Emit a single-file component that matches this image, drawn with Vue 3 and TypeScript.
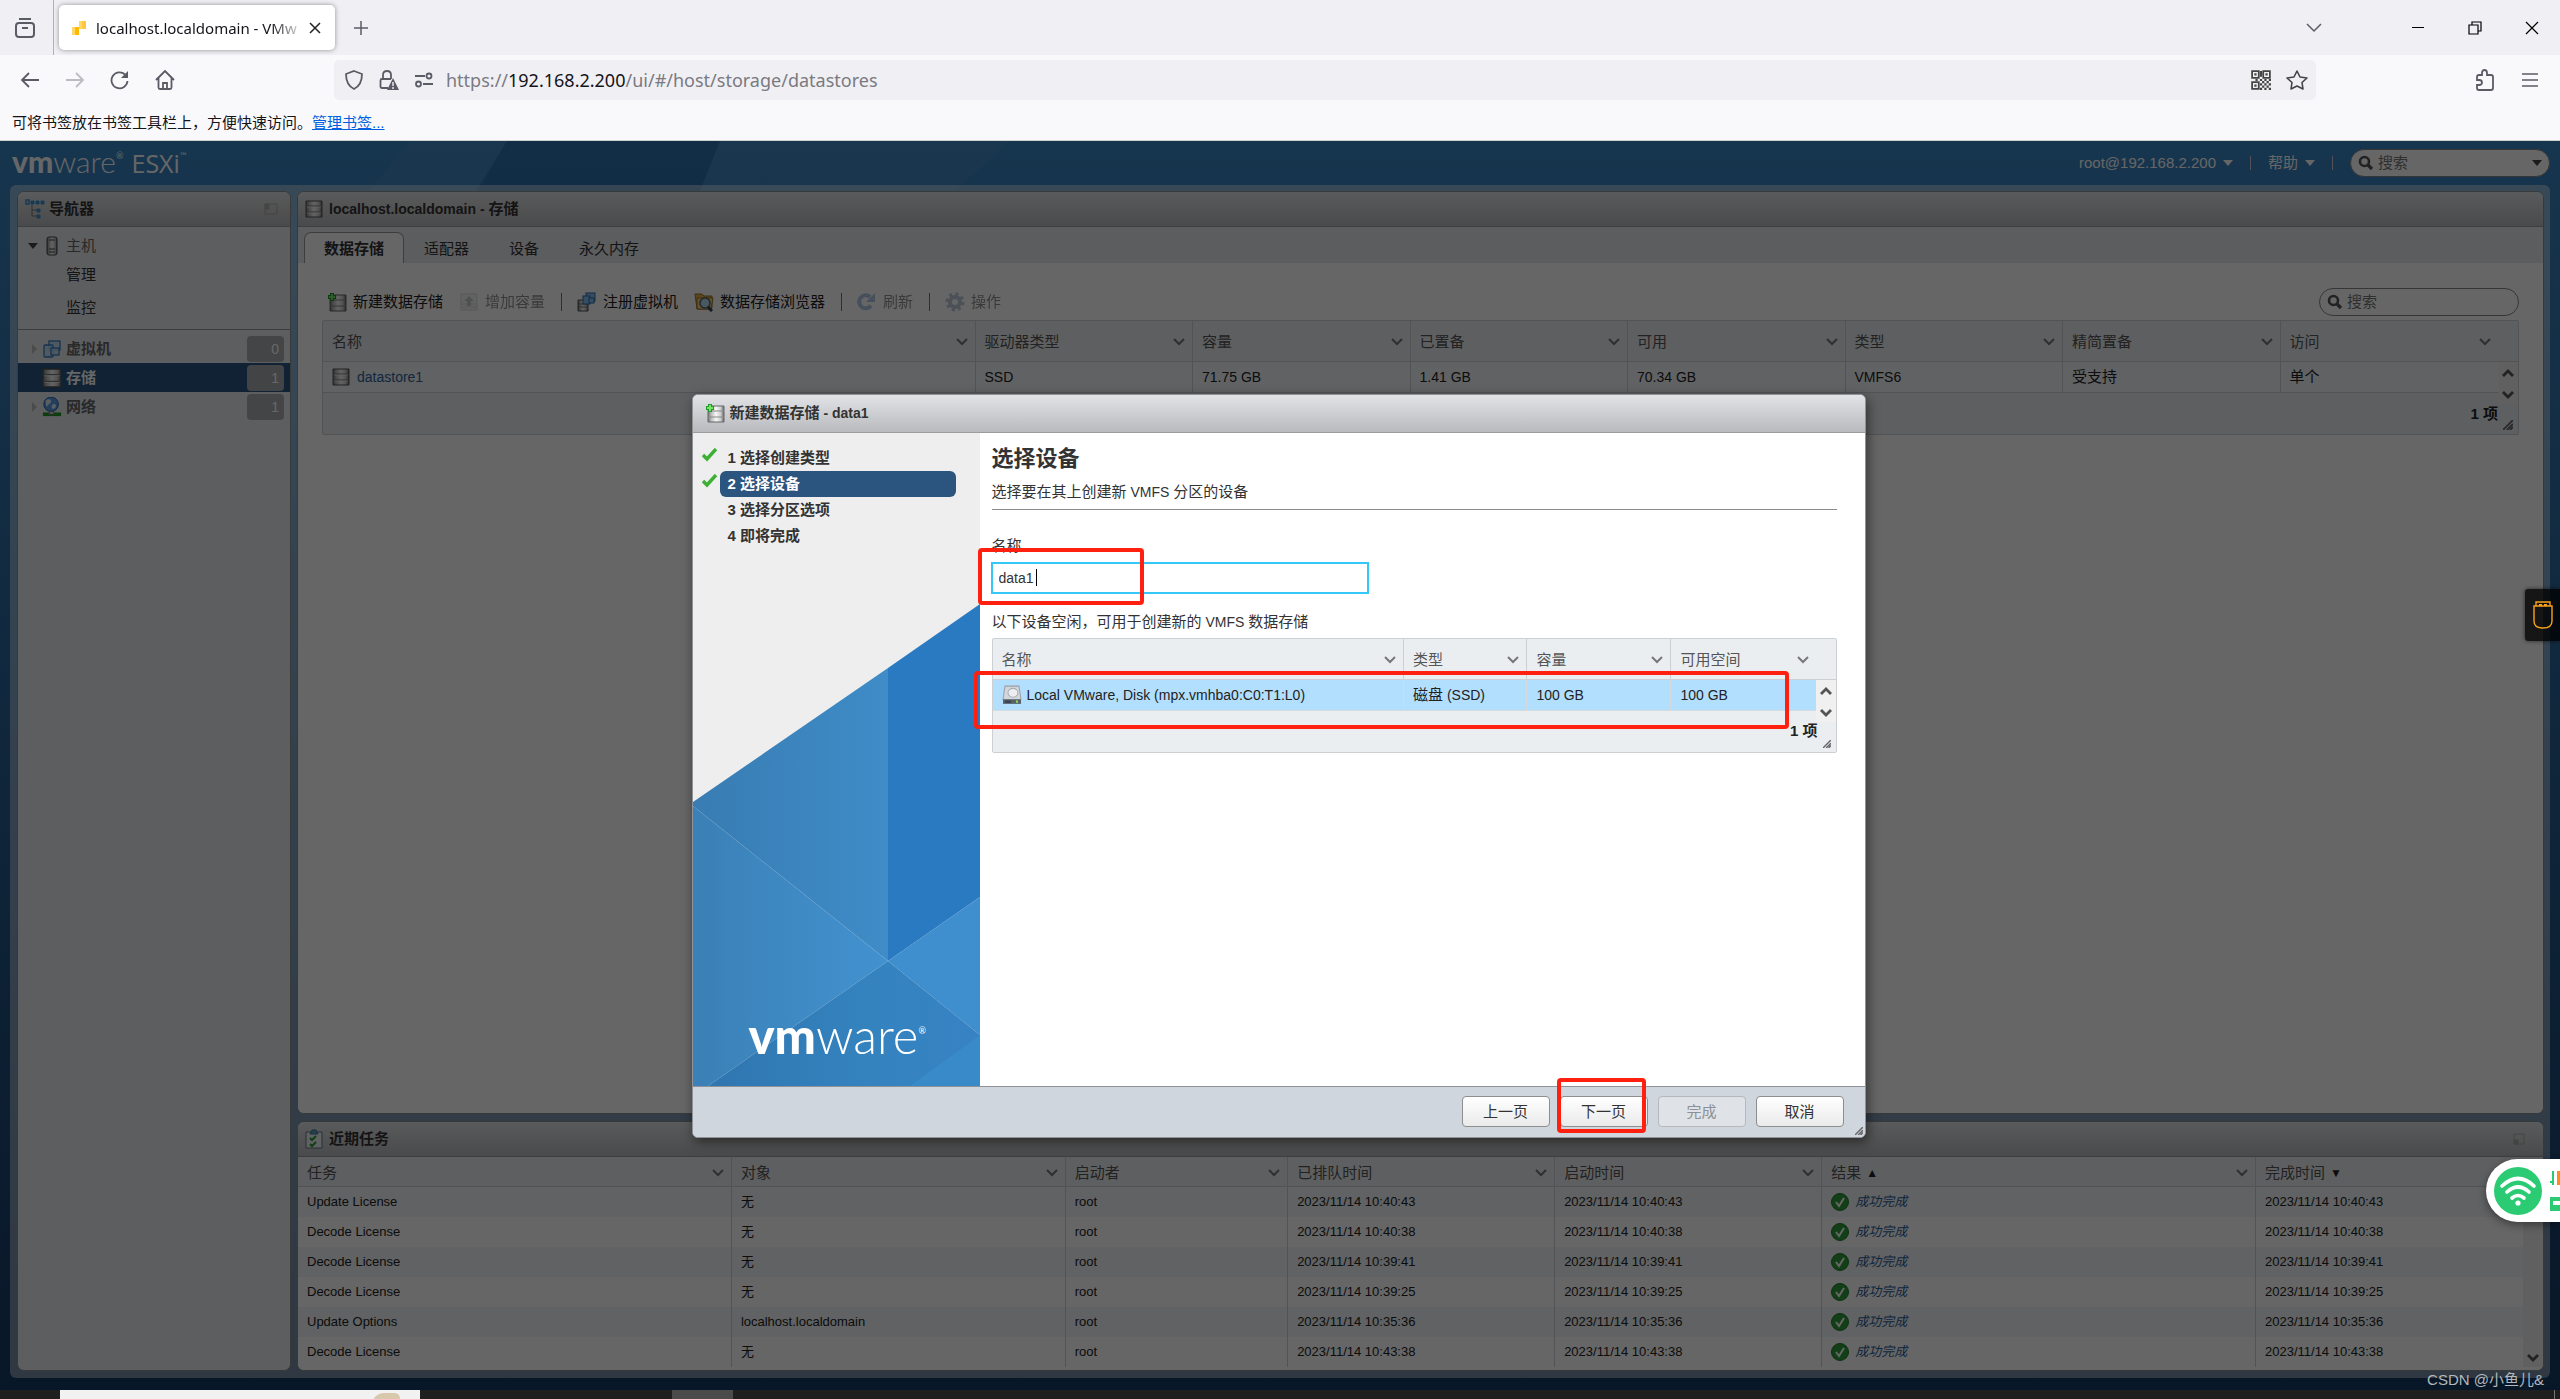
<script setup lang="ts">
import { ref } from 'vue'

interface Column { label: string; width: number; sort?: string }

const storeColumns: Column[] = [
  { label: '名称', width: 30 },
  { label: '驱动器类型', width: 10 },
  { label: '容量', width: 10 },
  { label: '已置备', width: 10 },
  { label: '可用', width: 10 },
  { label: '类型', width: 10 },
  { label: '精简置备', width: 10 },
  { label: '访问', width: 10 },
]

const deviceColumns: Column[] = [
  { label: '名称', width: 50 },
  { label: '类型', width: 15 },
  { label: '容量', width: 17.5 },
  { label: '可用空间', width: 17.5 },
]

const taskColumns: Column[] = [
  { label: '任务', width: 19.5 },
  { label: '对象', width: 15 },
  { label: '启动者', width: 10 },
  { label: '已排队时间', width: 12 },
  { label: '启动时间', width: 12 },
  { label: '结果', width: 19.5, sort: '▲' },
  { label: '完成时间', width: 12, sort: '▼' },
]

const tasks = [
  { name: 'Update License', target: '无', time: '2023/11/14 10:40:43' },
  { name: 'Decode License', target: '无', time: '2023/11/14 10:40:38' },
  { name: 'Decode License', target: '无', time: '2023/11/14 10:39:41' },
  { name: 'Decode License', target: '无', time: '2023/11/14 10:39:25' },
  { name: 'Update Options', target: 'localhost.localdomain', time: '2023/11/14 10:35:36' },
  { name: 'Decode License', target: '无', time: '2023/11/14 10:43:38' },
]

const inventory = [
  { label: '虚拟机', icon: '#i-vms', count: 0, active: false },
  { label: '存储', icon: '#i-store', count: 1, active: true },
  { label: '网络', icon: '#i-net', count: 1, active: false },
]

const steps = [
  { label: '1 选择创建类型', done: true, current: false },
  { label: '2 选择设备', done: true, current: true },
  { label: '3 选择分区选项', done: false, current: false },
  { label: '4 即将完成', done: false, current: false },
]

const url = ref('')
const name = ref('data1')
const globalQuery = ref('')
const storeQuery = ref('')
</script>

<template>
  <div class="page">
    <svg class="defs" aria-hidden="true">
      <defs>
        <linearGradient id="metal" x1="0" x2="1" y1="0" y2="0">
          <stop offset="0" stop-color="#777" /><stop offset=".2" stop-color="#bbb" />
          <stop offset=".5" stop-color="#f8f8f8" /><stop offset=".8" stop-color="#ccc" /><stop offset="1" stop-color="#666" />
        </linearGradient>
        <symbol id="i-store" viewBox="0 0 18 18">
          <path d="M1 1h16v16H1z" fill="url(#metal)" stroke="#555" />
          <path d="M1 6h16M1 12h16" stroke="#777" stroke-width="1" />
          <path d="M2 7h14M2 13h14" stroke="#fff" opacity=".6" />
        </symbol>
        <symbol id="i-store-add" viewBox="0 0 20 20">
          <path d="M3 3h16v16H3z" fill="url(#metal)" stroke="#666" />
          <path d="M3 8h16M3 14h16" stroke="#888" />
          <path d="M5 1v8M1 5h8" stroke="#1f9a2b" stroke-width="4" />
          <path d="M5 2v6M2 5h6" stroke="#7be36a" stroke-width="2" />
        </symbol>
        <symbol id="i-grow" viewBox="0 0 20 20">
          <path d="M2 2h16v16H2z" fill="#e6ece8" stroke="#bbb" />
          <path d="M2 12h16M2 15h16" stroke="#bbb" />
          <path d="M10 4l5 5h-3v5H8V9H5z" fill="#8a9a8f" />
        </symbol>
        <symbol id="i-vms" viewBox="0 0 20 20">
          <g fill="#bcdcf7" fill-opacity=".85" stroke="#3a7fc4" stroke-width="1.3">
            <rect x="7" y="2" width="11" height="9" /><rect x="2" y="6" width="9" height="12" rx="1" /><rect x="9" y="9" width="8" height="7" />
          </g>
        </symbol>
        <symbol id="i-register" viewBox="0 0 20 20">
          <path d="M1 8h10v11H1z" fill="url(#metal)" stroke="#555" /><path d="M1 12h10M1 15h10" stroke="#777" />
          <g fill="#8cc1ee" stroke="#2a6cb4"><rect x="9" y="1" width="9" height="8" /><rect x="6" y="4" width="7" height="8" /><rect x="12" y="6" width="5" height="5" /></g>
        </symbol>
        <symbol id="i-browse" viewBox="0 0 20 20">
          <path d="M1 2h7l2 2h8v12l-3 1H3z" fill="#e2b04c" stroke="#9a7326" /><path d="M3 6h16l-2 11H3z" fill="#f4d27c" stroke="#9a7326" />
          <circle cx="11" cy="11" r="5" fill="#b9dcf2" stroke="#567" stroke-width="1.5" /><path d="M14 15l4 4" stroke="#345" stroke-width="3" />
        </symbol>
        <symbol id="i-refresh" viewBox="0 0 20 20">
          <path d="M14 13.500A6.500 6.500 0 1 1 13 5" fill="none" stroke="#5b93d0" stroke-width="4" /><path d="M18 1v9H9z" fill="#5b93d0" />
        </symbol>
        <symbol id="i-gear" viewBox="0 0 20 20">
          <circle cx="10" cy="10" r="8" fill="none" stroke="#7f95b5" stroke-width="3" stroke-dasharray="3.2 3.080" />
          <circle cx="10" cy="10" r="5" fill="none" stroke="#7f95b5" stroke-width="4" />
        </symbol>
        <symbol id="i-net" viewBox="0 0 20 22">
          <circle cx="9" cy="8" r="8" fill="#5b9de6" stroke="#1d56a8" /><path d="M4 3c3-1 5 0 5 2S6 8 5 10 3 7 3 5zM11 8c3-1 4 1 3 3s-3 3-4 1 0-3 1-4z" fill="#dcefff" />
          <path d="M0 19h20" stroke="#1a9b22" stroke-width="4" /><path d="M6 19l2-3h3l2 3z" fill="#ddd" stroke="#666" />
        </symbol>
        <symbol id="i-search" viewBox="0 0 16 16">
          <circle cx="6.500" cy="6.500" r="4.500" fill="none" stroke="#555" stroke-width="2.600" /><path d="M10 10l4 4" stroke="#555" stroke-width="3.200" />
        </symbol>
        <symbol id="i-chev" viewBox="0 0 12 8"><path d="M1 1l5 5 5-5" fill="none" stroke="currentColor" stroke-width="2" /></symbol>
        <symbol id="i-bigchev" viewBox="0 0 12 8"><path d="M1 1l5 5 5-5" fill="none" stroke="currentColor" stroke-width="2.800" /></symbol>
        <symbol id="i-grip" viewBox="0 0 10 10"><path d="M0 10L10 0M4 10l6-6M7 10l3-3" stroke="#666" stroke-width="1.800" /></symbol>
        <symbol id="i-ok" viewBox="0 0 18 18">
          <circle cx="9" cy="9" r="8.500" fill="#2f9e3a" stroke="#1d7a28" /><path d="M5 9l3 4 5-8" fill="none" stroke="#fff" stroke-width="2" />
        </symbol>
      </defs>
    </svg>

    <header class="chrome">
      <div class="tabstrip">
        <button class="ico first" aria-label="最近浏览">
          <svg width="22" height="20" viewBox="0 0 22 20" fill="none" stroke="#5b5b66" stroke-width="2"><path d="M5 1h12" /><rect x="2" y="5" width="18" height="14" rx="3" /><path d="M8 10h6" /></svg>
        </button>
        <div class="tab">
          <svg width="16" height="16" viewBox="0 0 16 16"><path d="M8 1h7v8H8z" fill="#ffc83d" /><path d="M1 7h7v8H1z" fill="#ffb900" /><path d="M8 1h3v8H8zM1 7h3v8H1z" fill="#ffd76a" /></svg>
          <span class="tab-title">localhost.localdomain - VMw</span>
          <button class="ico" aria-label="关闭标签页"><svg width="12" height="12" viewBox="0 0 12 12" stroke="#222" stroke-width="1.500"><path d="M1 1l10 10M11 1L1 11" /></svg></button>
        </div>
        <button class="ico plus" aria-label="新标签页"><svg width="16" height="16" viewBox="0 0 16 16" stroke="#5b5b66" stroke-width="1.500"><path d="M8 1v14M1 8h14" /></svg></button>
        <div class="winctl">
          <button class="ico list" aria-label="列出标签页"><svg width="16" height="10" viewBox="0 0 16 10" fill="none" stroke="#5b5b66" stroke-width="1.500"><path d="M1 1l7 7 7-7" /></svg></button>
          <button class="ico" aria-label="最小化"><svg width="14" height="14" viewBox="0 0 14 14" stroke="#000"><path d="M1 6.500h12" /></svg></button>
          <button class="ico" aria-label="还原"><svg width="14" height="14" viewBox="0 0 14 14" fill="none" stroke="#000" stroke-width="1.200"><path d="M1 4h9v9H1zM4 4V1h9v9h-3" /></svg></button>
          <button class="ico" aria-label="关闭"><svg width="14" height="14" viewBox="0 0 14 14" stroke="#000" stroke-width="1.200"><path d="M1 1l12 12M13 1L1 13" /></svg></button>
        </div>
      </div>
      <div class="toolbar">
        <div class="navbtns">
          <button class="ico" aria-label="后退"><svg width="20" height="20" viewBox="0 0 20 20" fill="none" stroke="#5b5b66" stroke-width="1.800"><path d="M19 10H2M9 3l-7 7 7 7" /></svg></button>
          <button class="ico" aria-label="前进"><svg width="20" height="20" viewBox="0 0 20 20" fill="none" stroke="#bcbcc2" stroke-width="1.800"><path d="M1 10h17M11 3l7 7-7 7" /></svg></button>
          <button class="ico" aria-label="刷新"><svg width="20" height="20" viewBox="0 0 20 20" fill="none" stroke="#5b5b66" stroke-width="1.800"><path d="M17.500 11A8 8 0 1 1 15 4.500" /><path d="M18 1v7h-7z" fill="#5b5b66" stroke="none" /></svg></button>
          <button class="ico" aria-label="主页"><svg width="20" height="20" viewBox="0 0 20 20" fill="none" stroke="#5b5b66" stroke-width="1.800"><path d="M1 10l9-9 9 9M3.500 8v9.500q0 1.500 1.500 1.500h10q1.500 0 1.500-1.500V8M8 19v-6h4v6" /></svg></button>
        </div>
        <div class="urlbar">
          <svg width="20" height="20" viewBox="0 0 20 20" fill="none" stroke="#5b5b66" stroke-width="1.800"><path d="M10 1l8 3c0 7-2 12-8 15C4 16 2 11 2 4z" /></svg>
          <svg width="20" height="20" viewBox="0 0 20 20" fill="none" stroke="#5b5b66" stroke-width="1.800"><path d="M9 18H3q-1.500 0-1.500-1.500v-6Q1.500 9 3 9h9M4 9V5q0-4 4-4t4 4v4" /><path d="M14 8l6 12H8z" fill="#5b5b66" stroke="none" /><path d="M14 12v4M14 17v2" stroke="#fff" stroke-width="1.300" /></svg>
          <svg width="20" height="20" viewBox="0 0 20 20" fill="none" stroke="#5b5b66" stroke-width="1.800"><path d="M1 6h10M9 14h10" /><circle cx="15" cy="6" r="2.500" /><circle cx="4.500" cy="14" r="2.500" /></svg>
          <label class="urltext">https://<b>192.168.2.200</b>/ui/#/host/storage/datastores<input v-model="url" aria-label="地址" /></label>
          <svg width="20" height="20" viewBox="0 0 18 18" fill="none" stroke="#444" stroke-width="1.600"><path d="M1 1h6v6H1zM11 1h6v6h-6zM1 11h6v6H1z" /><path d="M3 4h2M13 4h2M3 14h2" stroke-width="2" /><path d="M9 1v5M8 9h2M12 9h2M16 9h2M10 11h2M14 11h2M12 13h2M16 13h2M10 15h2M14 15h2M12 17h2M16 17h2M4 9h2M9 12v2M9 16v2" stroke-width="2" /></svg>
          <svg width="22" height="22" viewBox="0 0 22 20" fill="none" stroke="#444" stroke-width="1.600" stroke-linejoin="round"><path d="M11 1l3 6 7 1-5 4.500 1 6.500-6-3-6 3 1-6.500L1 8l7-1z" /></svg>
        </div>
        <div class="right">
          <button class="ico" aria-label="扩展"><svg width="20" height="22" viewBox="0 0 20 22" fill="none" stroke="#5b5b66" stroke-width="1.800"><path d="M2 11V8q0-2 2-2h3V4q0-3 2.500-3T12 4v2h4q2 0 2 2v11q0 2-2 2H4q-2 0-2-2v-3h2q3 0 3-2.500T4 11z" /></svg></button>
          <button class="ico" aria-label="菜单"><svg width="16" height="14" viewBox="0 0 16 14" stroke="#5b5b66" stroke-width="1.500"><path d="M0 1h16M0 7h16M0 13h16" /></svg></button>
        </div>
      </div>
      <p class="bookmarks">可将书签放在书签工具栏上，方便快速访问。<a href="#">管理书签...</a></p>
    </header>

    <section class="app">
      <svg class="facets" viewBox="0 0 2560 1249" preserveAspectRatio="none" aria-hidden="true">
        <path d="M409 0L507 0 450 100 330 100z" fill="#fff" opacity=".04" />
        <path d="M507 0H720L680 100H445z" fill="#003070" opacity=".2" />
        <path d="M720 0H1010L900 100H680z" fill="#fff" opacity=".04" />
      </svg>

      <div class="appbar">
        <h1 class="brand"><span class="vm">vm</span><span class="ware">ware</span><sup>®</sup><span class="esx">ESXi</span><sup>™</sup></h1>
        <div class="appbar-right">
          <button class="link">root@192.168.2.200<i class="caret" /></button>
          <i class="bar" />
          <button class="link">帮助<i class="caret" /></button>
          <i class="bar" />
          <label class="search wide"><svg width="16" height="16"><use href="#i-search" /></svg><input v-model="globalQuery" placeholder="搜索" /><i class="caret dark" /></label>
        </div>
      </div>

      <div class="frame">
        <aside class="panel nav">
          <div class="panel-head nav-head">
            <svg width="20" height="20" viewBox="0 0 20 20" fill="none" stroke="#3a8fd0"><path d="M1 1h3v4H1z" stroke-width="1.500" /><path d="M6 2h3v3H6zM11 2h3v3h-3zM16 2h3v3h-3zM12 10h3v3h-3zM12 16h3v3h-3z" fill="#3a8fd0" /><path d="M7 6v11h5M7 11h5" stroke="#777" /></svg>
            <h2>导航器</h2>
            <svg class="dock" width="14" height="12" viewBox="0 0 14 12" fill="none" stroke="#888"><path d="M1 1h12v10H1z" /><path d="M1 1h4v5H1z" fill="#888" /></svg>
          </div>
          <div class="host">
            <a href="#" class="row host-row"><i class="caret dark" /><svg width="12" height="20" viewBox="0 0 12 20"><rect x="1" y="1" width="10" height="18" rx="2" fill="url(#metal)" stroke="#444" /><path d="M3 4h6M3 13h6M3 16h6" stroke="#444" /></svg>主机</a>
            <a href="#" class="sub">管理</a>
            <a href="#" class="sub">监控</a>
          </div>
          <a v-for="item in inventory" :key="item.label" href="#" class="row inv" :class="{ active: item.active }">
            <i class="tri" /><svg width="20" height="20"><use :href="item.icon" /></svg><b>{{ item.label }}</b><span class="badge">{{ item.count }}</span>
          </a>
        </aside>

        <div class="stack">
          <main class="panel main">
            <div class="panel-head">
              <svg width="18" height="18"><use href="#i-store" /></svg>
              <h2><span class="lat">localhost.localdomain - </span>存储</h2>
            </div>
            <nav class="tabs">
              <a href="#" class="on">数据存储</a><a href="#">适配器</a><a href="#">设备</a><a href="#">永久内存</a>
            </nav>
            <div class="content">
              <div class="actions">
                <button><svg width="20" height="20"><use href="#i-store-add" /></svg>新建数据存储</button>
                <button class="off"><svg width="20" height="20"><use href="#i-grow" /></svg>增加容量</button>
                <i class="bar" />
                <button><svg width="20" height="20"><use href="#i-register" /></svg>注册虚拟机</button>
                <button><svg width="20" height="20"><use href="#i-browse" /></svg>数据存储浏览器</button>
                <i class="bar" />
                <button class="off"><svg width="20" height="20"><use href="#i-refresh" /></svg>刷新</button>
                <i class="bar" />
                <button class="off"><svg width="20" height="20"><use href="#i-gear" /></svg>操作</button>
                <label class="search"><svg width="16" height="16"><use href="#i-search" /></svg><input v-model="storeQuery" placeholder="搜索" /></label>
              </div>
              <div class="grid">
                <table>
                  <colgroup><col v-for="c in storeColumns" :key="c.label" :style="{ width: c.width + '%' }" /></colgroup>
                  <thead><tr><th v-for="c in storeColumns" :key="c.label"><div>{{ c.label }}<svg width="12" height="8"><use href="#i-chev" /></svg></div></th></tr></thead>
                  <tbody><tr>
                    <td><a href="#" class="store"><svg width="18" height="18"><use href="#i-store" /></svg>datastore1</a></td>
                    <td>SSD</td><td>71.75 GB</td><td>1.41 GB</td><td>70.34 GB</td><td>VMFS6</td><td class="zh">受支持</td><td class="zh">单个</td>
                  </tr></tbody>
                </table>
                <div class="gutter"><div class="scroll"><svg class="flip" width="12" height="8"><use href="#i-bigchev" /></svg><svg width="12" height="8"><use href="#i-bigchev" /></svg></div></div>
                <div class="foot">1 项<svg width="10" height="10"><use href="#i-grip" /></svg></div>
              </div>
            </div>
          </main>

          <section class="panel tasks">
            <div class="panel-head">
              <svg width="18" height="20" viewBox="0 0 18 20"><path d="M1 3h16v16H1z" fill="#eef4f8" stroke="#678" /><path d="M5 5l2-4h4l2 4z" fill="#5aa0d0" stroke="#478" /><path d="M5 9l2 2 4-4M5 15l2 2 4-4" fill="none" stroke="#2a9a30" stroke-width="2" /></svg>
              <h2>近期任务</h2>
              <svg class="dock" width="12" height="12" viewBox="0 0 12 12" fill="none" stroke="#888"><path d="M1 1h10v10H1z" /><path d="M1 7h4v4H1z" fill="#888" /></svg>
            </div>
            <div class="grid tgrid">
              <table>
                <colgroup><col v-for="c in taskColumns" :key="c.label" :style="{ width: c.width + '%' }" /></colgroup>
                <thead><tr><th v-for="c in taskColumns" :key="c.label"><div>{{ c.label }}<span v-if="c.sort" class="sort">{{ c.sort }}</span><svg v-if="c.sort !== '▼'" width="12" height="8"><use href="#i-chev" /></svg></div></th></tr></thead>
                <tbody>
                  <tr v-for="(t, i) in tasks" :key="i">
                    <td>{{ t.name }}</td><td>{{ t.target }}</td><td>root</td><td>{{ t.time }}</td><td>{{ t.time }}</td>
                    <td><a href="#" class="result"><svg width="18" height="18"><use href="#i-ok" /></svg><em>成功完成</em></a></td>
                    <td>{{ t.time }}</td>
                  </tr>
                </tbody>
              </table>
              <div class="gutter"><div class="scroll"><svg class="flip" width="12" height="8"><use href="#i-bigchev" /></svg><svg width="12" height="8"><use href="#i-bigchev" /></svg></div></div>
            </div>
          </section>
        </div>
      </div>

      <div class="overlay">
        <form class="dialog" role="dialog" aria-label="新建数据存储" @submit.prevent>
          <div class="dlg-head"><svg width="20" height="20"><use href="#i-store-add" /></svg><h2>新建数据存储<span class="lat"> - data1</span></h2></div>
          <div class="dlg-body">
            <div class="side">
              <svg class="art" viewBox="0 0 287 482" preserveAspectRatio="none" aria-hidden="true">
                <defs>
                  <linearGradient id="a1"><stop offset="0" stop-color="#387cb2" /><stop offset="1" stop-color="#3f8cc8" /></linearGradient>
                  <linearGradient id="a2"><stop offset="0" stop-color="#3b80b6" /><stop offset="1" stop-color="#4292d0" /></linearGradient>
                  <linearGradient id="a3"><stop offset="0" stop-color="#3076b0" /><stop offset=".6" stop-color="#3483bf" /><stop offset="1" stop-color="#3782c4" /></linearGradient>
                </defs>
                <path d="M0 198L195 64V357L0 202z" fill="url(#a1)" />
                <path d="M195 64L287 0V293L195 357z" fill="#2a7ac2" />
                <path d="M0 202L195 357 15 482H0z" fill="url(#a2)" />
                <path d="M195 357L287 293V431z" fill="#3f8ecd" />
                <path d="M195 357L287 431V482H15z" fill="url(#a3)" />
                <path d="M287 431V482H217z" fill="#388ac8" />
              </svg>
              <ol>
                <li v-for="s in steps" :key="s.label">
                  <svg width="16" height="14" viewBox="0 0 16 14"><path v-if="s.done" d="M1 7l4 4L14 1" fill="none" stroke="#3cb034" stroke-width="3.400" /></svg>
                  <span :class="{ cur: s.current }">{{ s.label }}</span>
                </li>
              </ol>
              <div class="brand big"><span class="vm">vm</span><span class="ware">ware</span><sup>®</sup></div>
            </div>
            <div class="pane">
              <h3>选择设备</h3>
              <p class="desc">选择要在其上创建新<span class="lat"> VMFS </span>分区的设备</p>
              <label class="flabel" for="dsname">名称</label>
              <div class="field"><input id="dsname" v-model="name" /><i class="cursor" /><i class="mark m1" /></div>
              <p class="note">以下设备空闲，可用于创建新的<span class="lat"> VMFS </span>数据存储</p>
              <div class="grid dgrid">
                <table>
                  <colgroup><col v-for="c in deviceColumns" :key="c.label" :style="{ width: c.width + '%' }" /></colgroup>
                  <thead><tr><th v-for="c in deviceColumns" :key="c.label"><div>{{ c.label }}<svg width="12" height="8"><use href="#i-chev" /></svg></div></th></tr></thead>
                  <tbody><tr>
                    <td><span class="disk"><svg width="20" height="20" viewBox="0 0 20 18" preserveAspectRatio="none"><path d="M3 1h14l2 12H1z" fill="#d3d7dc" stroke="#9a9ea4" /><ellipse cx="11" cy="7" rx="5" ry="4" fill="#eceef0" stroke="#a9adb3" /><path d="M1 13h18v4H1z" fill="#56616c" /><path d="M14 15h2" stroke="#8be04a" stroke-width="2" /><path d="M3 15h6" stroke="#39424c" stroke-width="2" /></svg>Local VMware, Disk (mpx.vmhba0:C0:T1:L0)</span></td>
                    <td><span class="zh">磁盘</span> (SSD)</td><td>100 GB</td><td>100 GB</td>
                  </tr></tbody>
                </table>
                <div class="gutter"><div class="scroll"><svg class="flip" width="12" height="8"><use href="#i-bigchev" /></svg><svg width="12" height="8"><use href="#i-bigchev" /></svg></div></div>
                <div class="foot">1 项<svg width="8" height="8"><use href="#i-grip" /></svg></div>
                <i class="mark m2" />
              </div>
            </div>
          </div>
          <div class="dlg-foot">
            <button>上一页</button>
            <span class="next"><button>下一页</button><i class="mark m3" /></span>
            <button disabled>完成</button>
            <button>取消</button>
            <svg class="grip" width="8" height="8"><use href="#i-grip" /></svg>
          </div>
        </form>
      </div>

      <div class="usb"><svg width="20" height="28" viewBox="0 0 20 28" fill="none" stroke="#f9a11b" stroke-width="1.400"><path d="M3 5V1h14v4M1 5h18v15q0 7-9 7T1 20z" /><path d="M6 4h3M11 4h3" stroke-width="2" /></svg></div>
      <div class="wifi">
        <svg width="48" height="48" viewBox="0 0 48 48" fill="none" stroke="#fff" stroke-width="3.600" stroke-linecap="round"><circle cx="24" cy="24" r="24" fill="#2bcb73" stroke="none" /><path d="M8 19q16-15 32 0M13 25q11-10 22 0M18 31q6-5 12 0" /><circle cx="24" cy="36" r="2.600" fill="#fff" stroke="none" /></svg>
        <svg width="12" height="40" viewBox="0 0 12 40"><path d="M3 0v14M0 11h3" stroke="#2bcb73" stroke-width="2" /><path d="M7 0h5v14H7z" fill="#ff8a1e" /><path d="M0 26h12v14H0z" fill="#2bcb73" /><path d="M3 30h9v4H3z" fill="#fff" /></svg>
      </div>
      <div class="watermark">CSDN @小鱼儿&amp;</div>
    </section>

    <footer class="taskbar">
      <div class="thumb"><i /></div>
      <div class="task" />
      <div class="showdesk" />
    </footer>
  </div>
</template>

<style>
html, body { margin: 0; background: #1f1f1f; }
</style>

<style scoped>
.page { min-height: 100vh; display: flex; flex-direction: column; overflow: hidden; font: 15px/20px "Liberation Sans", "Noto Sans CJK SC", sans-serif; color: #333; }
.page *, .page *::before { box-sizing: border-box; }
.page svg { display: block; flex: none; }
.defs { position: absolute; width: 0; height: 0; }
h1, h2, h3, p, ol { margin: 0; padding: 0; font-weight: normal; }
button, input { font: inherit; color: inherit; }
a { color: inherit; text-decoration: none; }
.lat { font-size: 14px; }
.zh { font-size: 15px; }
.ico { border: 0; background: none; padding: 0; display: grid; place-items: center; flex: none; }

/* browser chrome */
.chrome { background: #f9f9fb; border-bottom: 1px solid #cfd2cc; height: 141px; color: #15141a; flex: none; }
.tabstrip { background: #f0f0f4; height: 55px; display: flex; align-items: center; }
.first { width: 54px; height: 55px; border-right: 1px solid #b0b0b6; padding-right: 4px; }
.tab { margin-left: 5px; width: 276px; height: 45px; background: #fff; border-radius: 5px; box-shadow: 0 0 5px rgba(0, 0, 0, .4); display: flex; align-items: center; gap: 9px; padding: 0 14px 0 12px; }
.tab-title { flex: 1; font: 15px/20px "Noto Sans", sans-serif; white-space: nowrap; overflow: hidden; mask-image: linear-gradient(90deg, #000 84%, transparent); }
.tab .ico { margin-left: -5px; }
.plus { margin-left: 18px; }
.winctl { margin-left: auto; display: flex; align-items: center; gap: 43px; padding-right: 21px; }
.list { margin-right: 46px; }
.toolbar { display: flex; align-items: center; padding-top: 5px; }
.navbtns { display: flex; gap: 25px; width: 334px; padding-left: 20px; }
.urlbar { flex: 1; height: 40px; background: #f0f0f4; border-radius: 5px; display: flex; align-items: center; gap: 15px; padding: 0 8px 0 10px; }
.urltext { flex: 1; display: flex; font: 18px/24px "Noto Sans", sans-serif; color: #7a7a82; margin-left: -3px; }
.urltext b { font-weight: normal; color: #15141a; }
.urltext input { flex: 1; border: 0; background: none; outline: 0; padding: 0; }
.right { width: 244px; display: flex; align-items: center; justify-content: flex-end; gap: 27px; padding-right: 22px; }
.bookmarks { padding: 13px 12px 0; }
.bookmarks a { color: #0061e0; text-decoration: underline; }

/* application shell */
.app { flex: 1; position: relative; display: flex; flex-direction: column; background: linear-gradient(#3985c3, #163a63); }
.facets { position: absolute; inset: 0; width: 100%; height: 100%; }
.appbar { height: 44px; display: flex; align-items: center; justify-content: space-between; padding: 0 10px 0 12px; position: relative; color: #fff; }
.brand { display: flex; align-items: baseline; font: 30px/32px Lato, sans-serif; color: #fff; }
.appbar .brand { padding-bottom: 2px; }
.brand .vm { font-weight: 900; }
.brand .ware { font-weight: 300; }
.brand sup { font-size: 9px; line-height: 9px; align-self: flex-start; margin-top: 6px; }
.brand .esx { font: 25px/32px "Open Sans", sans-serif; margin-left: 8px; }
.appbar-right { display: flex; align-items: center; }
.link { border: 0; background: none; padding: 0; display: flex; align-items: center; gap: 7px; }
.caret { border: 5px solid transparent; border-top: 6px solid #fff; border-bottom: 0; flex: none; }
.caret.dark { border-top-color: #444; }
.bar { width: 1px; height: 18px; background: #777; flex: none; }
.appbar .bar { margin: 0 17px; height: 14px; background: #ccd; }
.search { width: 200px; height: 28px; border: 1px solid #888; border-radius: 14px; background: #fff; display: flex; align-items: center; gap: 4px; padding: 0 7px; }
.search input { flex: 1; min-width: 0; border: 0; padding: 0; outline: 0; background: none; }
.search input::placeholder { color: #777; }
.frame { flex: 1; position: relative; margin: 0 10px 12px; border-radius: 6px; background: rgba(255, 255, 255, .42); padding: 6px 6px 7px 7px; display: flex; gap: 6px; }
.panel { background: #e9ecee; border: 1px solid #8c8f92; border-radius: 7px; overflow: hidden; }
.panel-head { height: 35px; border-bottom: 1px solid #9a9b9d; background: linear-gradient(#e0e2e4, #b9babd); display: flex; align-items: center; gap: 6px; padding: 0 18px 0 7px; }
.panel-head h2, .dlg-head h2 { font-size: 15px; font-weight: bold; white-space: pre; }
.panel-head h2 .lat, .dlg-head h2 .lat { font-size: 14px; }
.dock { margin-left: auto; opacity: .5; }
.nav { width: 274px; flex: none; }
.nav-head { padding: 0 12px 0 7px; gap: 4px; }
.host { border-bottom: 1px solid #999; padding-top: 4px; height: 103px; margin-bottom: 4px; }
.row { display: flex; align-items: center; height: 29px; padding: 0 6px 0 10px; color: #666; }
.host-row { gap: 8px; }
.sub { display: block; padding-left: 48px; line-height: 20px; margin: 5px 0 13px; }
.sub:first-of-type { margin-top: 0; }
.inv { padding-left: 14px; }
.inv svg { margin: 0 4px 0 5px; }
.tri { border: 5px solid transparent; border-left-color: #bbb; border-right: 0; }
.inv.active { background: #29557f; color: #fff; }
.inv.active .tri { border-left-color: transparent; }
.badge { margin-left: auto; width: 37px; height: 26px; border-radius: 4px; background: #aaadb0; color: #fff; font-size: 14px; line-height: 26px; text-align: right; padding-right: 5px; }
.inv.active .badge { background: #a9abad; }
.stack { flex: 1; min-width: 0; display: flex; flex-direction: column; gap: 7px; }
.main { flex: 1; display: flex; flex-direction: column; }
.tabs { display: flex; align-items: flex-end; height: 36px; padding-left: 6px; background: #e6e8ea; }
.tabs a { height: 31px; line-height: 34px; padding: 0 20px; }
.tabs .on { background: #fff; border: 1px solid #999; border-bottom: 0; border-radius: 7px 7px 0 0; font-weight: bold; padding: 0 19px; line-height: 32px; }
.content { flex: 1; background: #fff; padding: 23px 24px 0; }
.actions { display: flex; align-items: center; height: 34px; padding: 0 0 3px 5px; }
.actions button { border: 0; background: none; padding: 0; margin-right: 16px; display: flex; align-items: center; gap: 6px; color: #222; }
.actions .bar { margin-right: 15px; }
.actions .off { opacity: .5; }
.actions .search { margin-left: auto; }

/* data grids */
.grid { position: relative; display: grid; grid-template-columns: minmax(0, 1fr) 20px; border: 1px solid #ccd0d3; border-radius: 2px; background: #ebeef1; }
table { width: 100%; border-collapse: separate; border-spacing: 0; table-layout: fixed; }
th, td { text-align: left; font-weight: normal; padding: 0 9px; border-right: 1px solid #ccd0d3; border-bottom: 1px solid #ccd0d3; white-space: nowrap; }
th:last-child, td:last-child { border-right: 0; }
th { height: 41px; color: #555; padding-top: 2px; }
th div { display: flex; align-items: center; justify-content: space-between; margin-right: -2px; }
th svg { color: #777; margin-left: auto; }
td { height: 31px; font-size: 14px; background: #f3f5f7; color: #222; }
td.zh { font-size: 15px; }
.gutter { display: flex; flex-direction: column; }
.gutter::before { content: ""; height: 41px; flex: none; border-bottom: 1px solid #ccd0d3; }
.scroll { width: 20px; height: 42px; flex: none; margin-bottom: -12px; position: relative; background: #f0f0f0; display: flex; flex-direction: column; align-items: center; justify-content: space-between; padding: 7px 0 5px; color: #555; }
.flip { transform: rotate(180deg); }
.foot { grid-column: 1 / -1; height: 41px; display: flex; align-items: center; justify-content: flex-end; gap: 5px; color: #222; padding: 0 5px 0 0; font-weight: bold; }
.foot svg { align-self: flex-end; margin-bottom: 4px; }
.store, .disk, .result { display: flex; align-items: center; gap: 5px; }
.store { color: #2c6199; gap: 7px; }
.tgrid { border: 0; border-radius: 0; grid-template-columns: minmax(0, 1fr) 20px; padding-bottom: 3px; background: #fff; }
.tgrid th { height: 30px; background: #ebeef1; }
.tgrid th div { justify-content: flex-start; }
.tgrid .sort { font-size: 12px; margin-left: 5px; color: #222; }
.tgrid td { height: 30px; font-size: 13px; border-bottom: 0; background: #fff; }
.tgrid tr:nth-child(odd) td { background: #f1f4f7; }
.tgrid .gutter::before { height: 30px; background: #ebeef1; }
.tgrid .scroll { flex: 1; margin: 0; }
.result { color: #2c6199; font-size: 13px; gap: 6px; }

/* modal dialog */
.overlay { position: absolute; inset: 0; background: rgba(0, 0, 0, .6); display: flex; align-items: center; justify-content: center; padding-right: 3px; }
.dialog { width: 1174px; max-width: 96%; background: #fff; border: 1px solid #8f9296; border-radius: 6px; box-shadow: 2px 4px 12px rgba(0, 0, 0, .5); }
.dlg-head { height: 38px; border-bottom: 1px solid #9b9c9f; border-radius: 5px 5px 0 0; background: linear-gradient(#e1e3e6, #b9babe); display: flex; align-items: center; gap: 5px; padding-left: 12px; }
.dlg-body { display: flex; height: 653px; }
.side { width: 287px; flex: none; background: #eee; position: relative; display: flex; flex-direction: column; justify-content: space-between; }
.art { position: absolute; left: 0; bottom: 0; width: 100%; height: 482px; }
.side ol { list-style: none; padding: 12px 24px 0 9px; position: relative; font-weight: bold; }
.side li { display: flex; align-items: center; height: 26px; gap: 2px; }
.side li svg { margin-top: -5px; }
.side li span { flex: 1; height: 26px; line-height: 25px; border-radius: 6px; padding-left: 8px; }
.side li .cur { background: #2b547f; color: #fff; }
.big { position: relative; font-size: 49px; line-height: 50px; margin: 0 0 26px 56px; }
.big sup { margin-top: 16px; }
.pane { flex: 1; min-width: 0; padding: 11px 28px 0 12px; }
h3 { font-size: 22px; line-height: 30px; font-weight: bold; }
.desc { padding: 8px 0 7px; border-bottom: 1px solid #8c8c8c; margin-bottom: 26px; white-space: pre; }
.flabel { display: block; margin-bottom: 6px; }
.field { position: relative; width: 378px; margin-left: -1px; }
.field input { width: 100%; height: 32px; border: 2px solid #33c8f8; padding: 0 6px; font-size: 14px; outline: 0; background: #fff; display: block; }
.cursor { position: absolute; left: 45px; top: 7px; width: 1px; height: 17px; background: #000; }
.note { margin: 18px 0 6px; white-space: pre; }
.dgrid td { background: #b3dfff; border-color: #d4dade; }
.mark { position: absolute; border: 4px solid #ff2010; border-radius: 4px; pointer-events: none; z-index: 2; }
.m1 { left: -13px; top: -14px; width: 166px; height: 57px; }
.m2 { left: -19px; right: 47px; top: 32px; height: 58px; }
.m3 { inset: -18px 2px -6px -3px; }
.dlg-foot { position: relative; height: 51px; border-top: 1px solid #8f9296; border-radius: 0 0 5px 5px; background: #d0d6de; display: flex; align-items: center; justify-content: flex-end; gap: 10px; padding-right: 21px; }
.dlg-foot button { width: 88px; height: 31px; border: 1px solid #8e8e8e; border-radius: 4px; background: linear-gradient(#fff, #eaeaea); padding: 0; display: block; }
.dlg-foot button:disabled { background: #dfe2e6; border-color: #b5b8bd; color: #8c9096; }
.next { position: relative; }
.grip { position: absolute; right: 2px; bottom: 2px; }

/* floating desktop widgets */
.usb { position: absolute; right: 0; top: 448px; width: 35px; height: 52px; border-radius: 3px 0 0 3px; background: rgba(0, 0, 0, .78); display: grid; place-items: center; box-shadow: 0 0 4px rgba(0, 0, 0, .6); }
.wifi { position: absolute; right: 0; bottom: 168px; width: 74px; height: 63px; border-radius: 32px 0 0 32px; background: #fff; display: flex; align-items: center; gap: 8px; padding-left: 8px; overflow: hidden; box-shadow: 0 3px 8px rgba(0, 0, 0, .4); }
.watermark { position: absolute; right: 16px; bottom: 0; font-size: 15px; color: #b4b8bd; }
.taskbar { height: 9px; background: #1f1f1f; display: flex; flex: none; }
.thumb { margin-left: 60px; width: 360px; background: #f2f2f2; overflow: hidden; display: flex; justify-content: flex-end; }
.thumb i { width: 28px; height: 12px; margin: 3px 20px 0 0; background: #d8c8ac; border-radius: 14px 6px 0 0; }
.task { margin-left: 252px; width: 61px; background: #4b4b4b; }
.showdesk { margin-left: auto; width: 6px; border-left: 1px solid #777; }
</style>
